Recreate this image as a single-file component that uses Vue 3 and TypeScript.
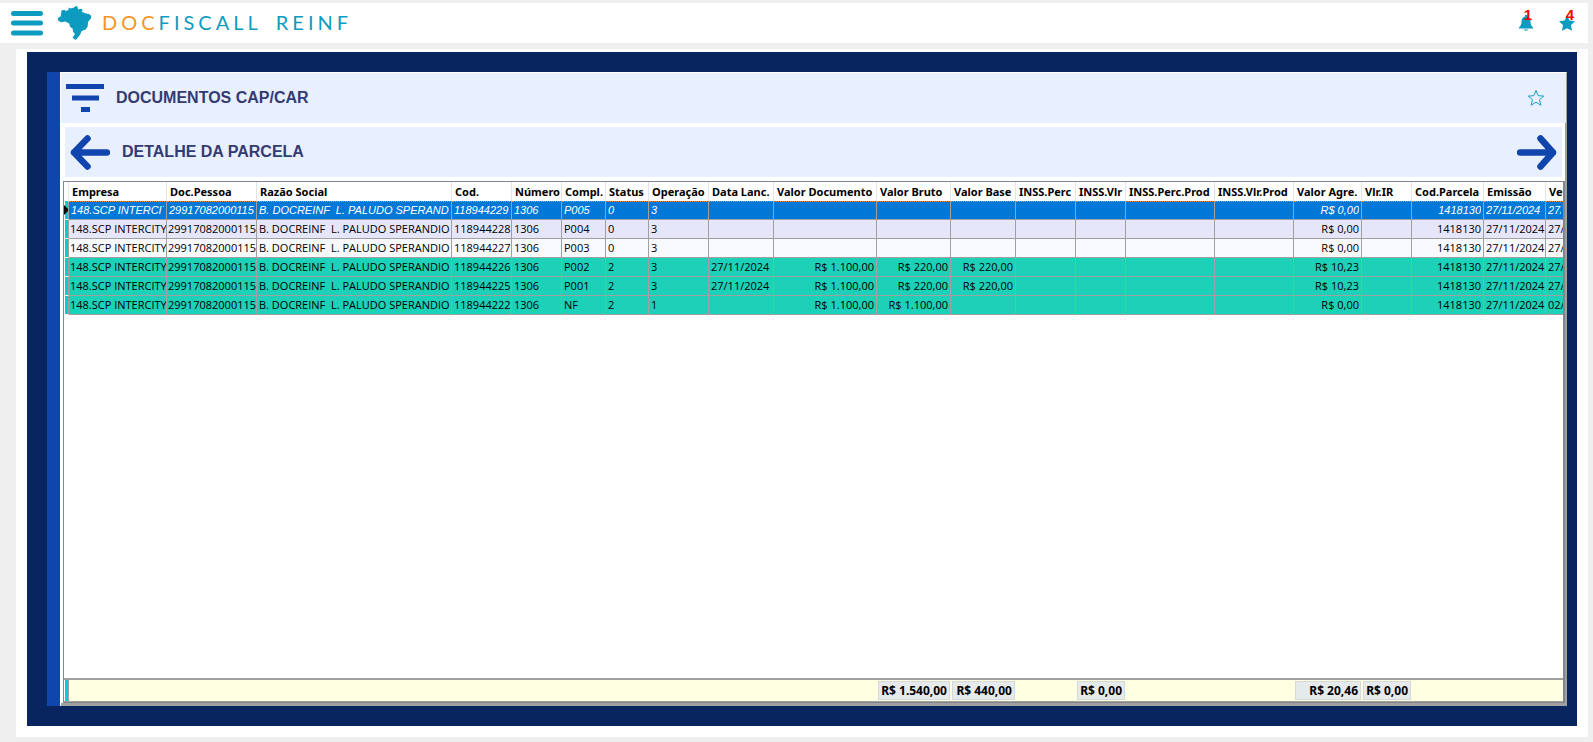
<script setup lang="ts">
interface Column {
  key: string
  label: string
  right?: boolean
  tight?: boolean
}

const columns: Column[] = [
  { key: 'empresa', label: 'Empresa', tight: true },
  { key: 'pessoa', label: 'Doc.Pessoa', tight: true },
  { key: 'razao', label: 'Razão Social' },
  { key: 'cod', label: 'Cod.' },
  { key: 'numero', label: 'Número' },
  { key: 'compl', label: 'Compl.' },
  { key: 'status', label: 'Status' },
  { key: 'operacao', label: 'Operação' },
  { key: 'data', label: 'Data Lanc.' },
  { key: 'documento', label: 'Valor Documento', right: true },
  { key: 'bruto', label: 'Valor Bruto', right: true },
  { key: 'base', label: 'Valor Base', right: true },
  { key: 'inssperc', label: 'INSS.Perc' },
  { key: 'inssvlr', label: 'INSS.Vlr' },
  { key: 'inssprod', label: 'INSS.Perc.Prod' },
  { key: 'inssvlrprod', label: 'INSS.Vlr.Prod' },
  { key: 'agre', label: 'Valor Agre.', right: true },
  { key: 'ir', label: 'Vlr.IR' },
  { key: 'parcela', label: 'Cod.Parcela', right: true },
  { key: 'emissao', label: 'Emissão' },
  { key: 'venc', label: 'Ve' },
]

type Row = Record<string, string>

const common: Row = {
  empresa: '148.SCP INTERCITY',
  pessoa: '29917082000115',
  razao: 'B. DOCREINF  L. PALUDO SPERANDIO',
  numero: '1306',
  parcela: '1418130',
  emissao: '27/11/2024',
  venc: '27/',
}

const rows: Row[] = [
  { ...common, kind: 'selected', cod: '118944229', compl: 'P005', status: '0', operacao: '3', agre: 'R$ 0,00' },
  { ...common, kind: 'lavender', cod: '118944228', compl: 'P004', status: '0', operacao: '3', agre: 'R$ 0,00' },
  { ...common, kind: 'plain', cod: '118944227', compl: 'P003', status: '0', operacao: '3', agre: 'R$ 0,00' },
  { ...common, kind: 'teal', cod: '118944226', compl: 'P002', status: '2', operacao: '3', data: '27/11/2024', documento: 'R$ 1.100,00', bruto: 'R$ 220,00', base: 'R$ 220,00', agre: 'R$ 10,23' },
  { ...common, kind: 'teal', cod: '118944225', compl: 'P001', status: '2', operacao: '3', data: '27/11/2024', documento: 'R$ 1.100,00', bruto: 'R$ 220,00', base: 'R$ 220,00', agre: 'R$ 10,23' },
  { ...common, kind: 'teal', cod: '118944222', compl: 'NF', status: '2', operacao: '1', documento: 'R$ 1.100,00', bruto: 'R$ 1.100,00', agre: 'R$ 0,00', venc: '02/' },
]

const totals: Row = {
  bruto: 'R$ 1.540,00',
  base: 'R$ 440,00',
  inssvlr: 'R$ 0,00',
  agre: 'R$ 20,46',
  ir: 'R$ 0,00',
}
</script>

<template>
  <div class="page">
    <header class="topbar">
      <button class="icon-button menu" type="button" aria-label="Menu">
        <svg width="32" height="26" viewBox="0 0 32 26">
          <path d="M2.500 3.500H29.500M2.500 13H29.500M2.500 23H29.500" stroke="#0d9bc0" stroke-width="5" stroke-linecap="round" />
        </svg>
      </button>
      <svg class="brazil" width="34" height="34" viewBox="0 0 34 34" aria-hidden="true">
        <path fill="#0d9bc0" d="M10.500 1.500l2 1 3-.8 2.500-1.700 1.500.5.500 3 2.500-.8 2 .6-.5 2.700 3.500 1.200 4 1 1.800 1.800-.5 2.500-2.800 3.500-.3 4.500-2 3-4 1.500-1.500 3.500-3 4-1.700 1.500-3-2.500 2.500-3.500-1.800-2-.7-3.500-2.500-1.700-.8-3.300-4-2-4 .7-3-1.500-.5-2.500 3-2L3.500 4.500l3-.7 1 1.200 3-1z" />
      </svg>
      <div class="brand"><span class="brand-doc">DOC</span><span>FISCALL</span><span class="brand-reinf">REINF</span></div>
      <button class="icon-button notice bell" type="button" aria-label="Notificações">
        <svg width="16" height="18" viewBox="0 0 16 18">
          <path fill="#0d9bc0" d="M7 1h2v1.500c2.500.5 3.500 2.500 3.500 5 0 3 .8 4.500 2.500 6v1H1v-1c1.700-1.500 2.500-3 2.500-6 0-2.500 1-4.500 3.500-5zM5.500 15.500h5c-.5 1.500-4.500 1.500-5 0z" />
        </svg>
        <span class="badge">1</span>
      </button>
      <button class="icon-button notice" type="button" aria-label="Favoritos">
        <svg width="18" height="18" viewBox="0 0 18 18">
          <path fill="#0d9bc0" d="M9 1.500l2.500 5 5.500.7-4 3.900 1 5.700-5-2.500-5 2.500 1-5.700-4-3.900 5.500-.7z" />
        </svg>
        <span class="badge">4</span>
      </button>
    </header>

    <main class="sheet">
      <div class="frame">
        <div class="rail"></div>
        <section class="content">
          <div class="bar bar-main">
            <button class="icon-button" type="button" aria-label="Filtrar">
              <svg width="38" height="30" viewBox="0 0 38 30">
                <path d="M0 3.500H38M6 15H33M15 26.500H24" stroke="#1045ad" stroke-width="5" />
              </svg>
            </button>
            <h1>DOCUMENTOS CAP/CAR</h1>
            <button class="icon-button star" type="button" aria-label="Favoritar">
              <svg width="18" height="18" viewBox="0 0 18 18">
                <path fill="none" stroke="#1b9fc6" stroke-linejoin="round" d="M9 1.500l2.200 5.200 5.600.4-4.300 3.600 1.400 5.500L9 13.200l-4.900 3 1.400-5.500L1.200 7.100l5.600-.4z" />
              </svg>
            </button>
          </div>

          <div class="body">
            <div class="bar bar-detail">
              <button class="icon-button" type="button" aria-label="Anterior">
                <svg width="40" height="36" viewBox="0 0 40 36">
                  <path d="M37 18.500H4M17.500 4.500L4 18.500L17.500 32.500" fill="none" stroke="#1045ad" stroke-width="6.500" stroke-linecap="round" stroke-linejoin="round" />
                </svg>
              </button>
              <h2>DETALHE DA PARCELA</h2>
              <button class="icon-button next" type="button" aria-label="Próximo">
                <svg width="40" height="36" viewBox="0 0 40 36">
                  <path d="M3 18.500H36M23.500 4.500L36 18.500L23.500 32.500" fill="none" stroke="#1045ad" stroke-width="6.500" stroke-linecap="round" stroke-linejoin="round" />
                </svg>
              </button>
            </div>

            <div class="grid">
              <table class="parcels">
                <colgroup>
                  <col class="w-mark" />
                  <col v-for="c in columns" :key="c.key" :class="'w-' + c.key" />
                </colgroup>
                <thead>
                  <tr>
                    <th class="mark"></th>
                    <th v-for="c in columns" :key="c.key" scope="col">{{ c.label }}</th>
                  </tr>
                </thead>
                <tbody>
                  <tr v-for="row in rows" :key="row.cod" :class="row.kind">
                    <td class="mark"><i v-if="row.kind === 'selected'" class="pointer"></i></td>
                    <td v-for="c in columns" :key="c.key" :class="{ right: c.right, tight: c.tight }"><div class="cell">{{ row[c.key] }}</div></td>
                  </tr>
                </tbody>
              </table>

              <table class="totals" aria-label="Totais">
                <colgroup>
                  <col class="w-mark" />
                  <col v-for="c in columns" :key="c.key" :class="'w-' + c.key" />
                </colgroup>
                <tbody>
                  <tr>
                    <td class="mark"></td>
                    <td v-for="c in columns" :key="c.key"><div v-if="totals[c.key]" class="total">{{ totals[c.key] }}</div></td>
                  </tr>
                </tbody>
              </table>
            </div>
          </div>
        </section>
      </div>
    </main>
  </div>
</template>

<style>
body {
  margin: 0;
  background: #efefef;
}
</style>

<style scoped>
.page {
  box-sizing: border-box;
  min-height: 100vh;
  display: flex;
  flex-direction: column;
  gap: 6px;
  padding: 3px 5px 5px 0;
  background: #efefef;
  font-family: "Noto Sans", "Open Sans", sans-serif;
}
.icon-button {
  display: block;
  flex: none;
  padding: 0;
  border: 0;
  background: none;
  cursor: pointer;
}
.icon-button svg {
  display: block;
}
.topbar {
  display: flex;
  align-items: center;
  height: 40px;
  padding: 0 12px 0 11px;
  background: #fff;
}
.brazil {
  margin-left: 15px;
}
.brand {
  flex: 1;
  margin-left: 10px;
  padding-bottom: 2px;
  color: #0d9bc0;
  font: 20px/24px Lato, sans-serif;
  letter-spacing: 4px;
}
.brand-doc {
  color: #f7941d;
}
.brand-reinf {
  margin-left: 14px;
}
.notice {
  position: relative;
}
.bell {
  margin-right: 24px;
}
.badge {
  position: absolute;
  top: -7px;
  right: 2px;
  color: #f00;
  font: bold 15px/16px "Liberation Sans", sans-serif;
}
.sheet {
  flex: 1;
  display: flex;
  margin-left: 16px;
  padding: 3px 11px 11px;
  background: #fff;
}
.frame {
  flex: 1;
  min-width: 0;
  display: flex;
  padding: 20px 10px 20px 20px;
  background: #09255f;
}
.rail {
  flex: none;
  width: 13px;
  background: #1045ad;
}
.content {
  flex: 1;
  min-width: 0;
  display: flex;
  flex-direction: column;
  border-top: 1px solid #fff;
  border-left: 1px solid #fff;
  border-right: 1px solid #a0a0a0;
  background: #fff;
}
.bar {
  display: flex;
  align-items: center;
  height: 50px;
  background: #e8efff;
}
.bar-main {
  padding: 0 21px 0 5px;
}
.bar-detail {
  margin: 0 3px 4px 4px;
  padding: 0 5px;
}
h1,
h2 {
  flex: 1;
  margin: 0 0 0 12px;
  color: #333c72;
  font: bold 16px/20px "Liberation Sans", Arial, sans-serif;
}
.body {
  flex: 1;
  display: flex;
  flex-direction: column;
  min-width: 0;
  padding-top: 4px;
  border-right: 1px solid #a0a0a0;
  border-bottom: 3px solid #a0a0a0;
}
.grid {
  flex: 1;
  display: flex;
  flex-direction: column;
  justify-content: space-between;
  margin-left: 2px;
  overflow: hidden;
  border: 1px solid #82868c;
  border-right-width: 2px;
}
table {
  width: 100%;
  table-layout: fixed;
  border-collapse: separate;
  border-spacing: 0;
}
.w-mark { width: 5px; }
.w-empresa { width: 98px; }
.w-pessoa { width: 90px; }
.w-razao { width: 195px; }
.w-cod { width: 60px; }
.w-numero { width: 50px; }
.w-compl { width: 44px; }
.w-status { width: 43px; }
.w-operacao { width: 60px; }
.w-data { width: 65px; }
.w-documento { width: 103px; }
.w-bruto { width: 74px; }
.w-base { width: 65px; }
.w-inssperc { width: 60px; }
.w-inssvlr { width: 50px; }
.w-inssprod { width: 89px; }
.w-inssvlrprod { width: 79px; }
.w-agre { width: 68px; }
.w-ir { width: 50px; }
.w-parcela { width: 72px; }
.w-emissao { width: 62px; }
th,
td {
  box-sizing: border-box;
  height: 19px;
  overflow: hidden;
  white-space: pre;
  text-align: left;
  vertical-align: top;
  color: #000;
}
th {
  padding: 0 0 0 3px;
  border-right: 1px solid #e5e5e5;
  font-size: 11px;
  font-weight: 700;
  line-height: 19px;
}
td {
  padding: 0 0 0 2px;
  border-right: 1px solid #a0a0a0;
  border-bottom: 1px solid #a0a0a0;
  font-family: "Open Sans", "Noto Sans", sans-serif;
  font-size: 11px;
  line-height: 18px;
}
.tight {
  padding-left: 1px;
}
.cell {
  overflow: hidden;
}
.right {
  padding-right: 2px;
  text-align: right;
}
th:last-child,
td:last-child {
  border-right: 0;
}
.lavender td { background: #e6e6fa; }
.plain td { background: #f8f8ff; }
.teal td { background: #1dd1b8; }
.selected td {
  padding: 0 2px;
  border-top: 1px dotted #f08a30;
  background: #0078d7;
  color: #fff;
  font-family: "Liberation Sans", Arial, sans-serif;
  font-style: italic;
  line-height: 17px;
}
tbody .mark,
tbody .selected .mark {
  padding: 0;
  border-top-color: transparent;
  border-bottom-color: #fff;
  background: linear-gradient(90deg, #fff 1px, #00ced1 1px);
}
.pointer {
  display: block;
  margin-top: 3px;
  border-left: 5px solid #000;
  border-top: 5px solid transparent;
  border-bottom: 5px solid transparent;
}
.totals {
  border-top: 2px solid #a0a0a0;
  border-bottom: 1px solid #a0a0a0;
}
.totals td {
  height: 21px;
  padding: 1px 1px 0;
  border: 0;
  background: #ffffe1;
}
.totals .mark {
  border-right: 1px solid #a0a0a0;
  background: linear-gradient(90deg, #fff 1px, #00ced1 1px);
}
.total {
  box-sizing: border-box;
  height: 19px;
  padding-right: 2px;
  border: 1px solid #d5d8dc;
  background: #e6eaea;
  font-family: "Noto Sans", sans-serif;
  font-size: 12px;
  font-weight: 700;
  line-height: 17px;
  text-align: right;
}
</style>
